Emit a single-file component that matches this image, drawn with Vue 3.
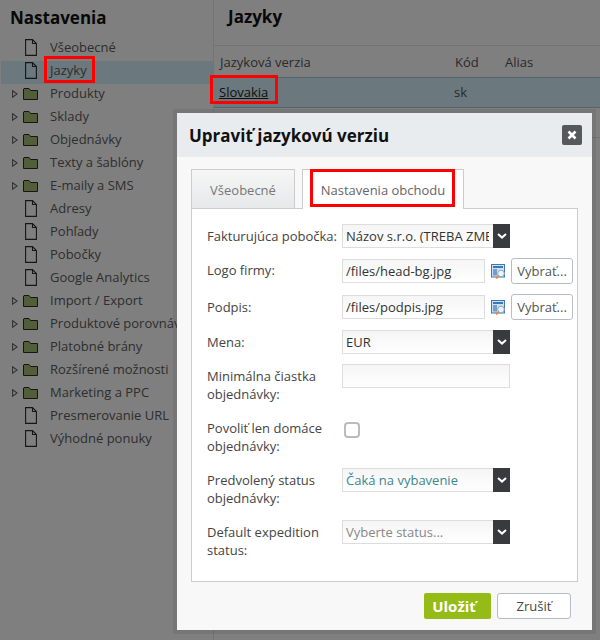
<script setup>
const items = [
  { t: 'Všeobecné' }, { t: 'Jazyky', active: true }, { t: 'Produkty', f: 1 }, { t: 'Sklady', f: 1 },
  { t: 'Objednávky', f: 1 }, { t: 'Texty a šablóny', f: 1 }, { t: 'E-maily a SMS', f: 1 }, { t: 'Adresy' },
  { t: 'Pohľady' }, { t: 'Pobočky' }, { t: 'Google Analytics' }, { t: 'Import / Export', f: 1 },
  { t: 'Produktové porovnávače', f: 1 }, { t: 'Platobné brány', f: 1 }, { t: 'Rozšírené možnosti', f: 1 },
  { t: 'Marketing a PPC', f: 1 }, { t: 'Presmerovanie URL' }, { t: 'Výhodné ponuky' }
]
</script>

<template>
  <div class="page">
    <aside class="side">
      <h2 class="side-title">Nastavenia</h2>
      <ul class="tree">
        <li v-for="i in items" :key="i.t" class="node" :class="{ active: i.active }">
          <span class="arrow-cell">
            <svg v-if="i.f" width="6" height="8" viewBox="0 0 6 8"><path d="M.6.8 5.2 4 .6 7.2Z" fill="none" stroke="#666" stroke-width="1.1"/></svg>
          </span>
          <span class="icon-cell">
            <svg v-if="i.f" width="15" height="12" viewBox="0 0 15 12"><path d="M.5 11.5V1L1 .5H6L7.5 2.5H14.5V11.5Z" fill="#a4bc72" stroke="#302a1c"/></svg>
            <svg v-else width="12" height="17" viewBox="0 0 12 17"><path d="M.6.6H7.5L11.4 4.5V16.4H.6ZM7.5.6V4.5H11.4" fill="none" stroke="#2c2c2c" stroke-width="1.1"/></svg>
          </span>
          <span class="node-text">{{ i.t }}</span>
        </li>
      </ul>
    </aside>
    <main class="content">
      <h1 class="content-title">Jazyky</h1>
      <div class="thead"><span class="c1">Jazyková verzia</span><span class="c2">Kód</span><span>Alias</span></div>
      <div class="trow"><a class="c1 link">Slovakia</a><span class="c2">sk</span></div>
      <div class="tempty"></div>
    </main>
    <div class="mark mark-jazyky"></div>
    <div class="mark mark-slovakia"></div>

    <div class="overlay"></div>

    <section class="dialog">
      <header class="dialog-head">
        <h3>Upraviť jazykovú verziu</h3>
        <button class="close"><svg width="10" height="10" viewBox="0 0 10 10"><path d="M1.5 1.5 8.5 8.5M8.5 1.5 1.5 8.5" stroke="#fff" stroke-width="2.6"/></svg></button>
      </header>
      <div class="dialog-body">
        <div class="tabs">
          <div class="tab">Všeobecné</div>
          <div class="tab tab-on">Nastavenia obchodu<div class="mark mark-tab"></div></div>
        </div>
        <div class="panel">
          <div class="row">
            <label>Fakturujúca pobočka:</label>
            <div class="select"><span class="val dark">Názov s.r.o. (TREBA ZMENIŤ)</span><span class="caret"><svg width="10" height="6" viewBox="0 0 10 6"><path d="M1 1 5 4.6 9 1" fill="none" stroke="#fff" stroke-width="2"/></svg></span></div>
          </div>
          <div class="row row-wide">
            <label>Logo firmy:</label>
            <div class="input short">/files/head-bg.jpg</div>
            <svg class="pic" width="15" height="15" viewBox="0 0 15 15"><rect x=".5" y=".5" width="13" height="12.5" fill="#cfe0f2" stroke="#3a78b8"/><rect x="2" y="2" width="10" height="2" fill="#3a78b8"/><rect x="2" y="5" width="4" height="6.5" fill="#6f9fce"/><circle cx="10" cy="9.5" r="3.3" fill="#eef4fa" stroke="#8fa5b8"/><path d="M7.5 12 5 14.5" stroke="#e08a3c" stroke-width="1.8"/></svg>
            <button class="pick">Vybrať...</button>
          </div>
          <div class="row">
            <label>Podpis:</label>
            <div class="input short">/files/podpis.jpg</div>
            <svg class="pic" width="15" height="15" viewBox="0 0 15 15"><rect x=".5" y=".5" width="13" height="12.5" fill="#cfe0f2" stroke="#3a78b8"/><rect x="2" y="2" width="10" height="2" fill="#3a78b8"/><rect x="2" y="5" width="4" height="6.5" fill="#6f9fce"/><circle cx="10" cy="9.5" r="3.3" fill="#eef4fa" stroke="#8fa5b8"/><path d="M7.5 12 5 14.5" stroke="#e08a3c" stroke-width="1.8"/></svg>
            <button class="pick">Vybrať...</button>
          </div>
          <div class="row row-narrow">
            <label>Mena:</label>
            <div class="select"><span class="val dark">EUR</span><span class="caret"><svg width="10" height="6" viewBox="0 0 10 6"><path d="M1 1 5 4.6 9 1" fill="none" stroke="#fff" stroke-width="2"/></svg></span></div>
          </div>
          <div class="row tall">
            <label>Minimálna čiastka objednávky:</label>
            <div class="input"></div>
          </div>
          <div class="row tall">
            <label>Povoliť len domáce objednávky:</label>
            <span class="check"></span>
          </div>
          <div class="row tall">
            <label>Predvolený status objednávky:</label>
            <div class="select"><span class="val teal">Čaká na vybavenie</span><span class="caret"><svg width="10" height="6" viewBox="0 0 10 6"><path d="M1 1 5 4.6 9 1" fill="none" stroke="#fff" stroke-width="2"/></svg></span></div>
          </div>
          <div class="row tall last">
            <label>Default expedition status:</label>
            <div class="select"><span class="val muted">Vyberte status...</span><span class="caret"><svg width="10" height="6" viewBox="0 0 10 6"><path d="M1 1 5 4.6 9 1" fill="none" stroke="#fff" stroke-width="2"/></svg></span></div>
          </div>
        </div>
        <div class="actions">
          <button class="save">Uložiť</button>
          <button class="cancel">Zrušiť</button>
        </div>
      </div>
    </section>
  </div>
</template>

<style>
html, body { margin: 0; background: #fff; overflow: hidden; }
</style>

<style scoped>
.page { position: relative; width: 600px; height: 640px; overflow: hidden; display: flex; font-family: "Open Sans", sans-serif; font-size: 13px; color: #555; background: #fff; }
.side { width: 213px; flex: none; border-right: 1px solid #e8e8e8; box-sizing: content-box; }
.side-title { margin: 0; padding: 7px 0 0 10px; height: 31px; font-size: 17px; line-height: 22px; font-weight: 700; color: #111; }
.tree { list-style: none; margin: 0; padding: 0 0 0 1px; }
.node { display: flex; align-items: center; height: 23px; box-sizing: border-box; padding-bottom: 6px; }
.node.active { background: #d6f0fa; }
.arrow-cell { width: 10px; margin: 2px 0 0 11px; display: flex; }
.icon-cell { width: 15px; margin: 2px 0 0 1px; display: flex; align-items: center; justify-content: center; overflow: visible; }
.node-text { margin-left: 12px; white-space: nowrap; font-size: 13px; color: #5c5c5c; }
.content { flex: 1; min-width: 0; }
.content-title { margin: 0; padding: 5px 0 0 14px; height: 40px; font-size: 17px; line-height: 24px; font-weight: 700; color: #111; border-bottom: 1px solid #e6e6e6; }
.thead, .trow { display: flex; align-items: center; padding-left: 5px; }
.thead { height: 31px; padding-left: 6px; }
.trow { height: 29px; box-sizing: content-box; background: #d6f0fa; border-top: 1px solid #a8c6e0; border-bottom: 1px solid #a8c6e0; }
.tempty { height: 29px; border-bottom: 1px solid #e6e6e6; }
.c1 { width: 235px; flex: none; }
.c2 { width: 50px; flex: none; }
.trow > * { position: relative; top: -1px; }
.link { color: #222; text-decoration: underline; }
.mark { position: absolute; border: 3px solid #f00; box-sizing: border-box; z-index: 3; }
.mark-jazyky { left: 44px; top: 56px; width: 51px; height: 27px; z-index: 5; }
.mark-slovakia { left: 210px; top: 75px; width: 68px; height: 29px; z-index: 5; }
.mark-tab { left: 7px; top: -1px; width: 145px; height: 38px; }
.overlay { position: absolute; inset: 0; background: rgba(0, 0, 0, .5); z-index: 2; }
.dialog { position: absolute; left: 177px; top: 113px; width: 415px; height: 517px; background: #f8f8f8; z-index: 6; box-shadow: 0 0 0 4px rgba(0, 0, 0, .07); }
.dialog-head { height: 44px; background: #e8ecef; display: flex; align-items: center; justify-content: space-between; padding: 0 10px 0 12px; }
.dialog-head h3 { margin: 0; font-size: 17px; font-weight: 700; color: #111; }
.close { width: 20px; height: 20px; padding: 0; border: 0; border-radius: 2px; background: #55595c; display: flex; align-items: center; justify-content: center; }
.dialog-body { padding: 12px 14px 0; }
.tabs { display: flex; gap: 7px; height: 39px; align-items: flex-start; }
.tab { position: relative; width: 104px; height: 39px; box-sizing: border-box; border: 1px solid #ccc; border-bottom: 0; background: linear-gradient(#f6f6f6, #e6e8ea); text-align: center; line-height: 40px; color: #777; font-size: 13px; }
.tab-on { width: 162px; height: 40px; background: #fff; color: #666; z-index: 1; }
.panel { background: #fff; border: 1px solid #ccc; width: 387px; height: 374px; box-sizing: border-box; padding: 15px 0 0 15px; }
.row { display: flex; align-items: flex-start; height: 24px; margin-bottom: 11px; }
.row-wide { margin-bottom: 12px; }
.row-wide label { padding-top: 2px; }
.row-narrow { margin-bottom: 10px; }
.row.tall { height: 41px; margin-bottom: 11px; }
.row label { width: 135px; flex: none; line-height: 18px; color: #444; }
.row:not(.row-wide) label { padding-top: 3px; }
.select, .input { width: 168px; height: 24px; box-sizing: border-box; border: 1px solid #ddd; background: linear-gradient(#f5f5f5, #fff); display: flex; align-items: center; color: #333; }
.input { padding-left: 3px; line-height: 22px; }
.input.short { width: 143px; }
.select { position: relative; }
.val { flex: 1; min-width: 0; margin-right: 20px; padding-left: 3px; white-space: nowrap; overflow: hidden; }
.dark { color: #333; }
.teal { color: #3a8790; }
.muted { color: #888; }
.caret { position: absolute; right: -1px; top: -1px; width: 17px; height: 24px; background: #383b3e; display: flex; align-items: center; justify-content: center; }
.pic { margin: 5px 0 0 6px; flex: none; }
.pick { margin: -1px 0 0 5px; width: 62px; height: 26px; padding: 0; border: 1px solid #b8bcc8; border-radius: 3px; background: #fff; font: 13px "Open Sans", sans-serif; color: #555; }
.check { width: 16px; height: 16px; margin: 6px 0 0 2px; border: 2px solid #bbb; border-radius: 4px; box-sizing: border-box; background: #fff; }
.actions { display: flex; justify-content: flex-end; gap: 6px; padding: 11px 7px 0 0; }
.save { width: 67px; height: 26px; border: 0; border-radius: 2px; background: #95bb17; color: #fff; font: 700 15px "Open Sans", sans-serif; padding: 0 7px 0 0; }
.cancel { width: 74px; height: 26px; border: 1px solid #b8bcc8; border-radius: 3px; background: #fff; color: #444; font: 13px "Open Sans", sans-serif; padding: 0; }
</style>
